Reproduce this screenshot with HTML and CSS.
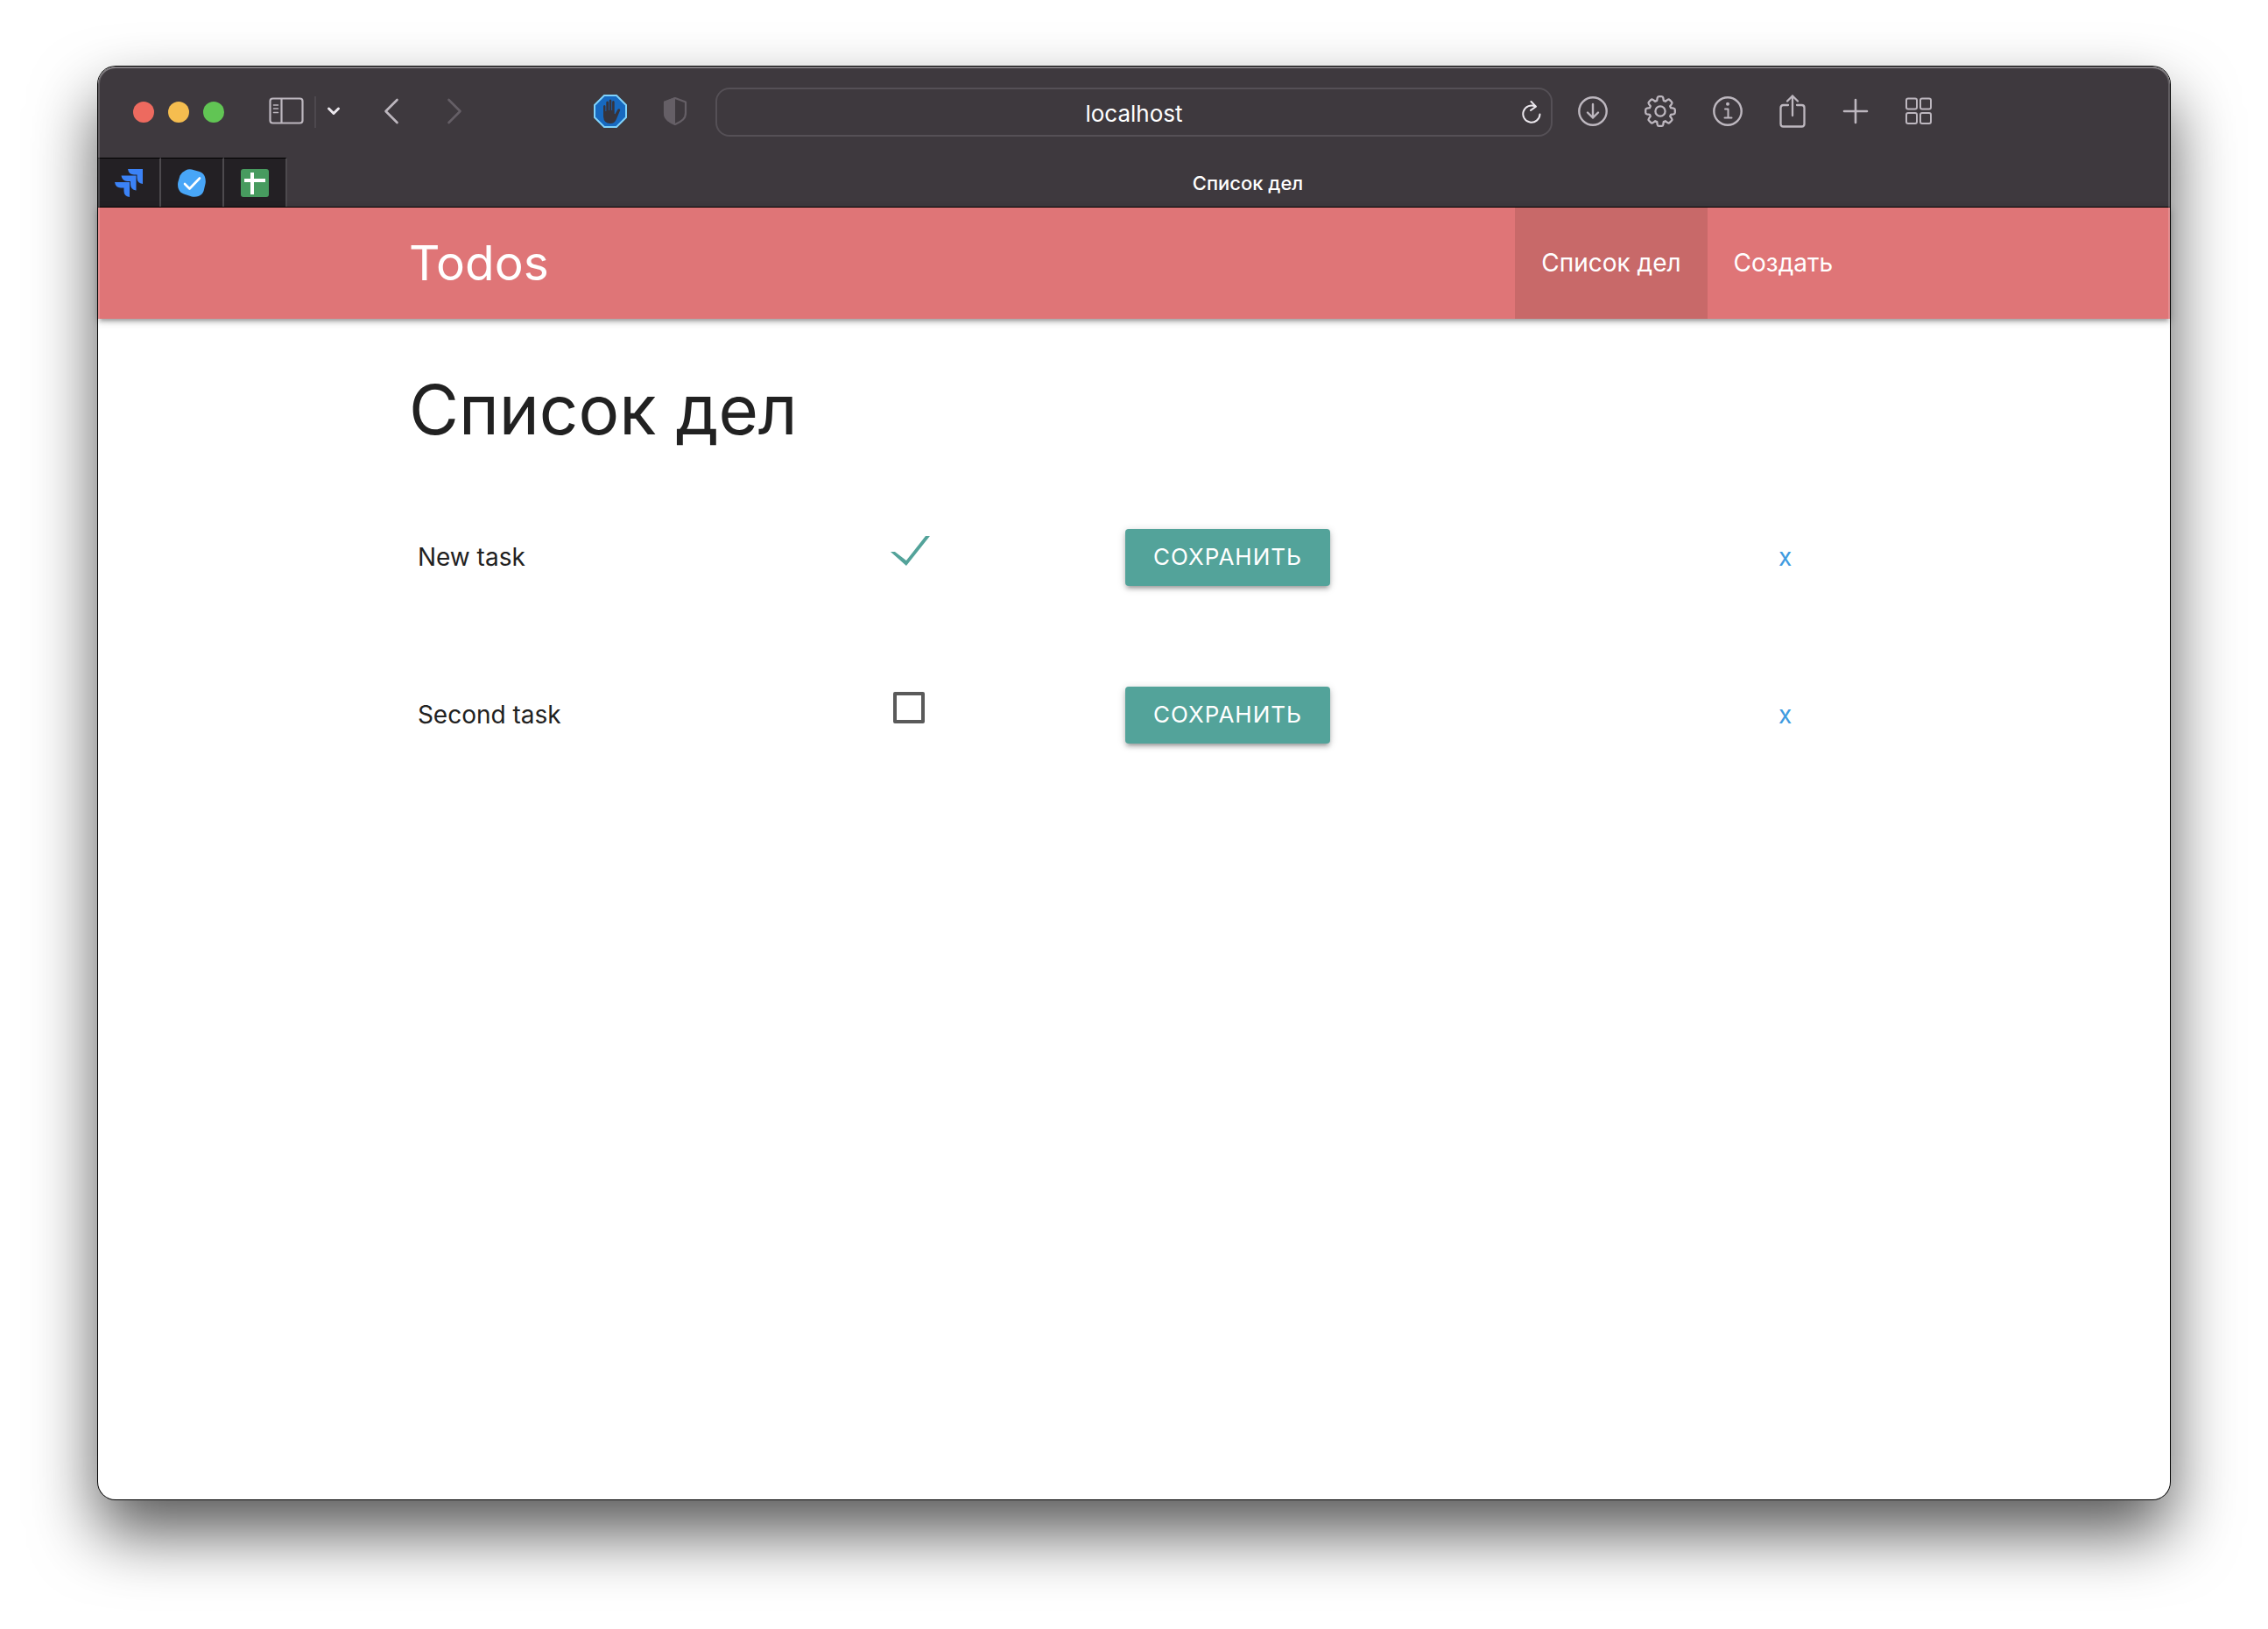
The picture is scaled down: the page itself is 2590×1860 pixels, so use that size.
FILE: index.html
```html
<!DOCTYPE html>
<html lang="ru">
<head>
<meta charset="utf-8">
<meta name="viewport" content="width=device-width, initial-scale=1">
<title>Список дел</title>
<link rel="stylesheet" href="styles.css">
</head>
<body>
<div class="window">
  <header class="toolbar">
    <div class="toolbar-left">
      <div class="lights">
        <span class="light light-close"></span>
        <span class="light light-minimize"></span>
        <span class="light light-zoom"></span>
      </div>
      <div class="sidebar-tools">
        <button class="icon-button" type="button" aria-label="Sidebar">
          <svg width="40" height="32" viewBox="0 0 40 32" fill="none" stroke="currentColor" stroke-width="2.200"><rect x="1.500" y="1.500" width="37" height="28" rx="3"/><path d="M14.500 2v27"/><path d="M5.500 9h5M5.500 13h5M5.500 17.500h5" stroke-width="1.600" stroke-linecap="round"/></svg>
        </button>
        <span class="divider"></span>
        <button class="icon-button menu-arrow" type="button" aria-label="Tab groups">
          <svg width="16" height="12" viewBox="0 0 16 12" fill="none" stroke="currentColor" stroke-width="3" stroke-linecap="round" stroke-linejoin="round"><path d="M2.500 3l5.500 5.500L13.500 3"/></svg>
        </button>
      </div>
      <div class="history">
        <button class="icon-button" type="button" aria-label="Back">
          <svg width="18" height="30" viewBox="0 0 18 30" fill="none" stroke="currentColor" stroke-width="2.600" stroke-linecap="round" stroke-linejoin="round"><path d="M15.500 2L2.500 15l13 13"/></svg>
        </button>
        <button class="icon-button" type="button" aria-label="Forward" disabled>
          <svg width="18" height="30" viewBox="0 0 18 30" fill="none" stroke="currentColor" stroke-width="2.600" stroke-linecap="round" stroke-linejoin="round"><path d="M2.500 2l13 13-13 13"/></svg>
        </button>
      </div>
      <div class="extensions">
        <button class="icon-button" type="button" aria-label="Content blocker">
          <svg width="38" height="38" viewBox="0 0 38 38"><path d="M12 1h14l11 11v14L26 37H12L1 26V12z" fill="#1769c0" stroke="#7fd2fb" stroke-width="2"/><path d="M11 13.500q0-1.500 1.250-1.500t1.250 1.500V19h.8V9q0-1.500 1.300-1.500T17 9v9h.7V7q0-1.500 1.300-1.500T20.300 7v11h.8V8.500Q21.100 7 22.400 7t1.300 1.500V22l.8.300 2.700-5q1-1.700 2.500-.9.900.500.300 1.800l-4.300 10.300Q23.800 33 19 33q-7.500 0-8-8z" fill="#37343c"/></svg>
        </button>
        <button class="icon-button shield" type="button" aria-label="Privacy report">
          <svg width="28" height="34" viewBox="0 0 28 34"><path d="M14 2L26 6.500V19q0 4.500-3 7.500-3 3-9 5.500-6-2.500-9-5.500-3-3-3-7.500V6.500z" fill="none" stroke="currentColor" stroke-width="2.200" stroke-linejoin="round"/><path d="M14 1v32Q7.500 30.300 4 26.500 1 23.500 1 19V6z" fill="currentColor"/></svg>
        </button>
      </div>
    </div>
    <div class="address">
      <input class="address-input" type="text" value="localhost" aria-label="Address">
      <button class="icon-button reload" type="button" aria-label="Reload">
        <svg width="22" height="28" viewBox="0 0 22 28" fill="none" stroke="currentColor" stroke-width="2" stroke-linecap="round" stroke-linejoin="round"><path d="M20.500 16.500A9.600 9.600 0 1 1 15.500 7.700M10.500 2l5.500 5.600-6 4.400"/></svg>
      </button>
    </div>
    <div class="toolbar-right">
      <button class="icon-button" type="button" aria-label="Downloads">
        <svg width="34" height="36" viewBox="0 0 34 36" fill="none" stroke="currentColor" stroke-width="2.400" stroke-linecap="round" stroke-linejoin="round"><circle cx="17" cy="18" r="15.700"/><path d="M17 10v15.500M11 19.500l6 6 6-6"/></svg>
      </button>
      <button class="icon-button" type="button" aria-label="Settings">
        <svg width="36" height="36" viewBox="0 0 36 36" fill="none" stroke="currentColor" stroke-width="2.300" stroke-linejoin="round"><circle cx="18" cy="18" r="5.600"/><path d="M14.700 2.800Q15 1.200 16.500 1.200h3q1.500 0 1.800 1.600l.5 3.100 2 .9 2.600-1.900q1.300-.9 2.400.2l2.100 2.100q1.100 1.100.2 2.400l-1.900 2.600.9 2 3.100.5q1.600.3 1.600 1.800v3q0 1.500-1.600 1.800l-3.100.5-.9 2 1.900 2.600q.9 1.300-.2 2.400l-2.100 2.100q-1.100 1.100-2.400.2l-2.600-1.900-2 .9-.5 3.100q-.3 1.600-1.800 1.600h-3q-1.500 0-1.800-1.600l-.5-3.100-2-.9-2.600 1.900q-1.300.9-2.400-.2l-2.100-2.100q-1.100-1.100-.2-2.400l1.900-2.600-.9-2-3.100-.5Q1.200 21 1.200 19.500v-3q0-1.500 1.600-1.800l3.100-.5.9-2-1.900-2.600Q4 8.300 5.100 7.200l2.100-2.100q1.100-1.100 2.400-.2l2.600 1.900 2-.9z"/></svg>
      </button>
      <button class="icon-button" type="button" aria-label="Page info">
        <svg width="34" height="36" viewBox="0 0 34 36" fill="none" stroke="currentColor" stroke-width="2.400" stroke-linecap="round" stroke-linejoin="round"><circle cx="17" cy="18" r="15.700"/><path d="M14 15.500h3.500v10M13.500 25.500h8" stroke-width="2"/><circle cx="17" cy="9.800" r="2" fill="currentColor" stroke="none"/></svg>
      </button>
      <button class="icon-button" type="button" aria-label="Share">
        <svg width="30" height="40" viewBox="0 0 30 40" fill="none" stroke="currentColor" stroke-width="2.300" stroke-linecap="round" stroke-linejoin="round"><path d="M10 13H4.500Q1.500 13 1.500 16v18.500q0 3 3 3h21q3 0 3-3V16q0-3-3-3H20M15 25V2.500M9 8.500l6-6 6 6"/></svg>
      </button>
      <button class="icon-button" type="button" aria-label="New tab">
        <svg width="30" height="30" viewBox="0 0 30 30" fill="none" stroke="currentColor" stroke-width="2.600" stroke-linecap="round"><path d="M15 2v26M2 15h26"/></svg>
      </button>
      <button class="icon-button" type="button" aria-label="Tab overview">
        <svg width="30" height="32" viewBox="0 0 30 32" fill="none" stroke="currentColor" stroke-width="2"><rect x="1" y="1.500" width="12" height="12" rx="2"/><rect x="17" y="1.500" width="12" height="12" rx="2"/><rect x="1" y="18" width="12" height="12" rx="2"/><rect x="17" y="18" width="12" height="12" rx="2"/></svg>
      </button>
    </div>
  </header>

  <div class="tabs">
    <button class="pinned" type="button" aria-label="Jira">
      <svg width="32" height="32" viewBox="0 0 32 32" fill="#3b82f6"><path d="M15 0h17v17q-6.500-1-6.500-7V6.500H22q-6 0-7-6.500z"/><path d="M7.500 7.500h17v17q-6.500-1-6.500-7V14h-3.500q-6 0-7-6.500z"/><path d="M0 15h17v17q-6.500-1-6.500-7v-3.500H7q-6 0-7-6.500z"/></svg>
    </button>
    <button class="pinned" type="button" aria-label="Tasks">
      <svg width="32" height="32" viewBox="0 0 32 32"><path d="M9 1.500Q12-.3 16 .5l9 2.500q4.500 1.500 5.800 5.500 1.500 4 .8 8l-2 8.500q-1.500 4.500-6 6-3.500 1.300-7.600.5L7 28.500Q2.500 27 1 23-.5 19.500.3 15L2.500 7.500Q4.500 3.500 9 1.500z" fill="#48a6f8"/><path d="M8 17l5.500 5.500L25 10.500" fill="none" stroke="#fff" stroke-width="2.600" stroke-linecap="round" stroke-linejoin="round"/></svg>
    </button>
    <button class="pinned" type="button" aria-label="Sheets">
      <svg width="32" height="32" viewBox="0 0 32 32"><rect width="32" height="32" rx="3" fill="#479b5f"/><path d="M4 11h24v4H4zM11 4h4v25h-4z" fill="#fff"/></svg>
    </button>
    <div class="tab-title">Список дел</div>
  </div>

  <nav class="navbar">
    <div class="container navbar-inner">
      <a class="brand" href="#">Todos</a>
      <ul class="menu">
        <li class="menu-item active"><a class="menu-link" href="#">Список дел</a></li>
        <li class="menu-item"><a class="menu-link" href="#">Создать</a></li>
      </ul>
    </div>
  </nav>

  <main class="container content">
    <h1 class="title">Список дел</h1>
    <ul class="todos">
      <li>
        <form class="todo">
          <label class="todo-name" for="todo-1">New task</label>
          <input class="todo-check" type="checkbox" id="todo-1" checked>
          <div><button class="save" type="button">СОХРАНИТЬ</button></div>
          <a class="remove" href="#">x</a>
        </form>
      </li>
      <li>
        <form class="todo">
          <label class="todo-name" for="todo-2">Second task</label>
          <input class="todo-check" type="checkbox" id="todo-2">
          <div><button class="save" type="button">СОХРАНИТЬ</button></div>
          <a class="remove" href="#">x</a>
        </form>
      </li>
    </ul>
  </main>
</div>
</body>
</html>
```
FILE: styles.css
```css
*,
*::before,
*::after {
  box-sizing: border-box;
}

body {
  margin: 0;
  min-height: 100vh;
  padding: 76px 112px 148px;
  display: flex;
  background: #fff;
  color: #212121;
  font-family: Inter, "Liberation Sans", sans-serif;
  font-size: 28px;
  line-height: 44px;
}

ul {
  margin: 0;
  padding: 0;
  list-style: none;
}

a {
  text-decoration: none;
}

button,
input {
  font: inherit;
}

svg {
  display: block;
}

/* Browser window */
.window {
  position: relative;
  flex: 1;
  min-width: 0;
  display: flex;
  flex-direction: column;
  border-radius: 20px;
  background: #fff;
  box-shadow: 0 0 0 1px #000, 0 38px 74px rgba(0, 0, 0, 0.66);
}

.window::after {
  content: "";
  position: absolute;
  inset: 0;
  border-radius: inherit;
  box-shadow: inset 0 0 0 2px rgba(255, 255, 255, 0.18), inset 0 2px 0 rgba(255, 255, 255, 0.2);
  pointer-events: none;
}

.toolbar {
  display: grid;
  grid-template-columns: minmax(0, 705fr) minmax(0, 956fr) minmax(0, 705fr);
  align-items: center;
  height: 104px;
  border-radius: 20px 20px 0 0;
  background: #3e393e;
  color: #bdb7bf;
}

.toolbar-left {
  display: flex;
  align-items: center;
  padding: 0 32px 0 40px;
}

.lights {
  display: flex;
  gap: 16px;
  margin-right: 51px;
}

.light {
  width: 24px;
  height: 24px;
  border-radius: 50%;
}

.light-close { background: #ed6a5f; }
.light-minimize { background: #f5bd4f; }
.light-zoom { background: #61c554; }

.icon-button {
  display: block;
  flex: none;
  padding: 0 0 2px;
  border: 0;
  background: none;
  color: inherit;
}

.icon-button:disabled {
  color: #655f66;
}

.sidebar-tools {
  display: flex;
  align-items: center;
  gap: 12px;
  margin-right: 49px;
}

.divider {
  width: 2px;
  height: 36px;
  background: #4d484e;
}

.menu-arrow {
  color: #ece8ee;
}

.history {
  display: flex;
  gap: 54px;
}

.extensions {
  display: flex;
  align-items: center;
  gap: 41px;
  margin-left: auto;
}

.shield {
  color: #655f66;
}

.address {
  position: relative;
}

.address-input {
  display: block;
  width: 100%;
  height: 56px;
  padding: 2px 48px 0;
  border: 2px solid #555056;
  border-radius: 16px;
  background: transparent;
  color: #fff;
  font-size: 26px;
  text-align: center;
}

.reload {
  position: absolute;
  top: 14px;
  right: 13px;
  color: #ece8ee;
}

.toolbar-right {
  display: flex;
  align-items: center;
  gap: 42px;
  padding-left: 29px;
}

/* Tab strip */
.tabs {
  display: flex;
  height: 57px;
  background: #3e393e;
  border-bottom: 1px solid #000;
}

.pinned {
  flex: none;
  width: 72px;
  padding: 0 19px;
  border: 0;
  border-top: 1px solid #000;
  border-right: 2px solid #4d4a4e;
  background: #232024;
}

.tab-title {
  flex: 1;
  padding-left: 44px;
  color: #fff;
  font-size: 22px;
  font-weight: 500;
  line-height: 58px;
  text-align: center;
}

/* Page */
.container {
  width: 70%;
  margin: 0 auto;
}

.navbar {
  background: #df7577;
  box-shadow: 0 4px 4px rgba(0, 0, 0, 0.14), 0 6px 2px -4px rgba(0, 0, 0, 0.12), 0 2px 10px rgba(0, 0, 0, 0.2);
}

.navbar-inner {
  display: flex;
  justify-content: space-between;
  height: 127px;
  line-height: 126px;
}

.brand {
  color: #fff;
  font-size: 55px;
}

.menu {
  display: flex;
}

.menu-item.active {
  background: #c86969;
}

.menu-link {
  display: block;
  padding: 0 30px;
  color: #fff;
}

.content {
  padding-bottom: 40px;
}

.title {
  margin: 56px 0 30px;
  font-size: 78px;
  font-weight: 400;
  line-height: 96px;
}

.todo {
  display: grid;
  grid-template-columns: 540fr 268fr 746fr 82fr;
  align-items: center;
  height: 180px;
  padding: 0 10px;
}

.todo-check {
  appearance: none;
  width: 45px;
  height: 36px;
  margin: 0 0 16px;
}

.todo-check::before {
  content: "";
  display: block;
  width: 36px;
  height: 36px;
  margin-left: 3px;
  border: 4px solid #5a5a5a;
  border-radius: 2px;
}

.todo-check:checked::before {
  width: 45px;
  margin-left: 0;
  border: 0;
  background: #53a39a;
  clip-path: polygon(0 20px, 5px 20px, 18px 30px, 40px 2px, 45px 2px, 18px 36px);
}

.save {
  display: block;
  height: 65px;
  padding: 0 32px;
  border: 0;
  border-radius: 4px;
  background: #53a39a;
  box-shadow: 0 4px 4px rgba(0, 0, 0, 0.14), 0 6px 2px -4px rgba(0, 0, 0, 0.12), 0 2px 10px rgba(0, 0, 0, 0.2);
  color: #fff;
  font-size: 26px;
  letter-spacing: 1px;
}

.remove {
  color: #3f9be0;
}
```
